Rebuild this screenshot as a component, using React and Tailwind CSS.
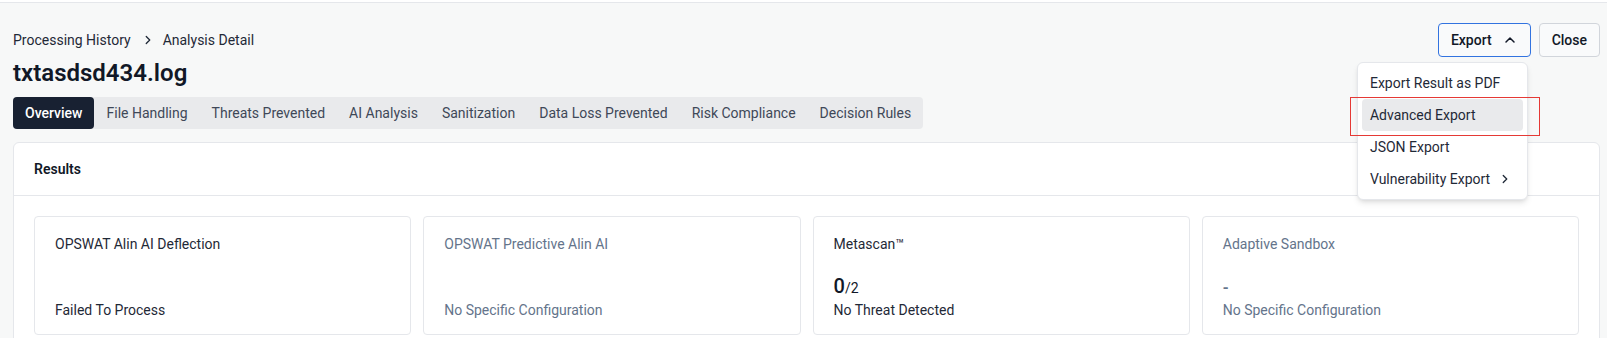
import React from 'react'
import { ChevronRight, ChevronUp } from 'lucide-react'

const tabs = [
  'Overview',
  'File Handling',
  'Threats Prevented',
  'AI Analysis',
  'Sanitization',
  'Data Loss Prevented',
  'Risk Compliance',
  'Decision Rules',
]

const engines = [
  { name: 'OPSWAT Alin AI Deflection', muted: false, value: null, desc: 'Failed To Process' },
  { name: 'OPSWAT Predictive Alin AI', muted: true, value: null, desc: 'No Specific Configuration' },
  { name: 'Metascan™', muted: false, value: { count: 0, total: 2 }, desc: 'No Threat Detected' },
  { name: 'Adaptive Sandbox', muted: true, value: '-', desc: 'No Specific Configuration' },
]

const exportOptions = ['Export Result as PDF', 'Advanced Export', 'JSON Export', 'Vulnerability Export']

function EngineCard({ engine }) {
  const tone = engine.muted ? 'text-[#64748b]' : 'text-[#1f2937]'
  return (
    <div className="h-[119px] bg-white border border-[#e5e7eb] rounded-[4px] px-5 pt-[17px] flex flex-col">
      <div className={`text-sm leading-5 ${tone}`}>{engine.name}</div>
      <div className="mt-[18px] h-7 flex items-end">
        {engine.value && typeof engine.value === 'object' && (
          <span className="text-[#111827]">
            <span className="text-xl font-medium leading-7">{engine.value.count}</span>
            <span className="text-sm">/{engine.value.total}</span>
          </span>
        )}
        {engine.value === '-' && <span className={`text-base font-semibold leading-6 ${tone}`}>-</span>}
      </div>
      <div className={`text-sm leading-5 ${tone}`}>{engine.desc}</div>
    </div>
  )
}

export default function App() {
  return (
    <div className="min-h-screen bg-[#f7f8f8] font-['Roboto',sans-serif] text-[#1f2937]">
      {/* top strip */}
      <div className="h-[3px] bg-white border-b border-[#e5e7eb]" />

      <div className="pl-[13px] pr-[7px] pt-5">
        {/* Breadcrumb + actions */}
        <div className="flex items-center justify-between h-[34px]">
          <div className="flex items-center text-sm text-[#1f2937]">
            <span>Processing History</span>
            <ChevronRight className="ml-[10px] mr-2 text-[#1f2937]" size={14} strokeWidth={2.25} />
            <span>Analysis Detail</span>
          </div>

          <div className="relative flex items-center gap-2">
            <button className="h-[34px] px-3 flex items-center gap-2.5 border border-[#3273e0] rounded-[4px] bg-[#f9fafb] text-sm font-medium text-[#111827]">
              Export
              <ChevronUp size={16} strokeWidth={2.25} />
            </button>
            <button className="h-[34px] px-3 border border-[#d1d5db] rounded-[4px] bg-[#f9fafb] text-sm font-medium text-[#111827]">
              Close
            </button>

            {/* Export menu */}
            <div className="absolute left-[-81px] top-[39px] w-[171px] z-20 bg-white border border-[#e5e7eb] rounded-md shadow-md p-1">
              {exportOptions.map((opt, i) => (
                <div
                  key={opt}
                  className={`h-8 px-2 flex items-center text-sm text-[#1f2937] rounded-[4px] ${
                    i === 1 ? 'bg-[#e9eaec]' : ''
                  }`}
                >
                  {opt}
                  {opt === 'Vulnerability Export' && <ChevronRight className="ml-2" size={14} strokeWidth={2.25} />}
                </div>
              ))}
            </div>

            {/* highlight annotation */}
            <div className="absolute left-[-88px] top-[74px] w-[190px] h-[39px] border border-[#e53935] z-30 pointer-events-none" />
          </div>
        </div>

        {/* Title */}
        <h1 className="text-2xl leading-8 font-semibold text-[#111827]">txtasdsd434.log</h1>

        {/* Tabs */}
        <div className="mt-2 inline-flex bg-[#e9eaec] rounded-[4px]">
          {tabs.map((tab, i) => (
            <div
              key={tab}
              className={`h-8 px-3 flex items-center text-sm rounded-[4px] ${
                i === 0 ? 'bg-[#182132] text-white font-medium' : 'text-[#3f4858]'
              }`}
            >
              {tab}
            </div>
          ))}
        </div>

        {/* Results */}
        <div className="mt-[13px] bg-white border border-[#e5e7eb] rounded-md">
          <div className="h-[53px] px-5 flex items-center border-b border-[#e5e7eb] text-sm font-semibold text-[#111827]">
            Results
          </div>
          <div className="p-5 grid grid-cols-4 gap-3">
            {engines.map((e) => (
              <EngineCard key={e.name} engine={e} />
            ))}
          </div>
        </div>
      </div>
    </div>
  )
}
